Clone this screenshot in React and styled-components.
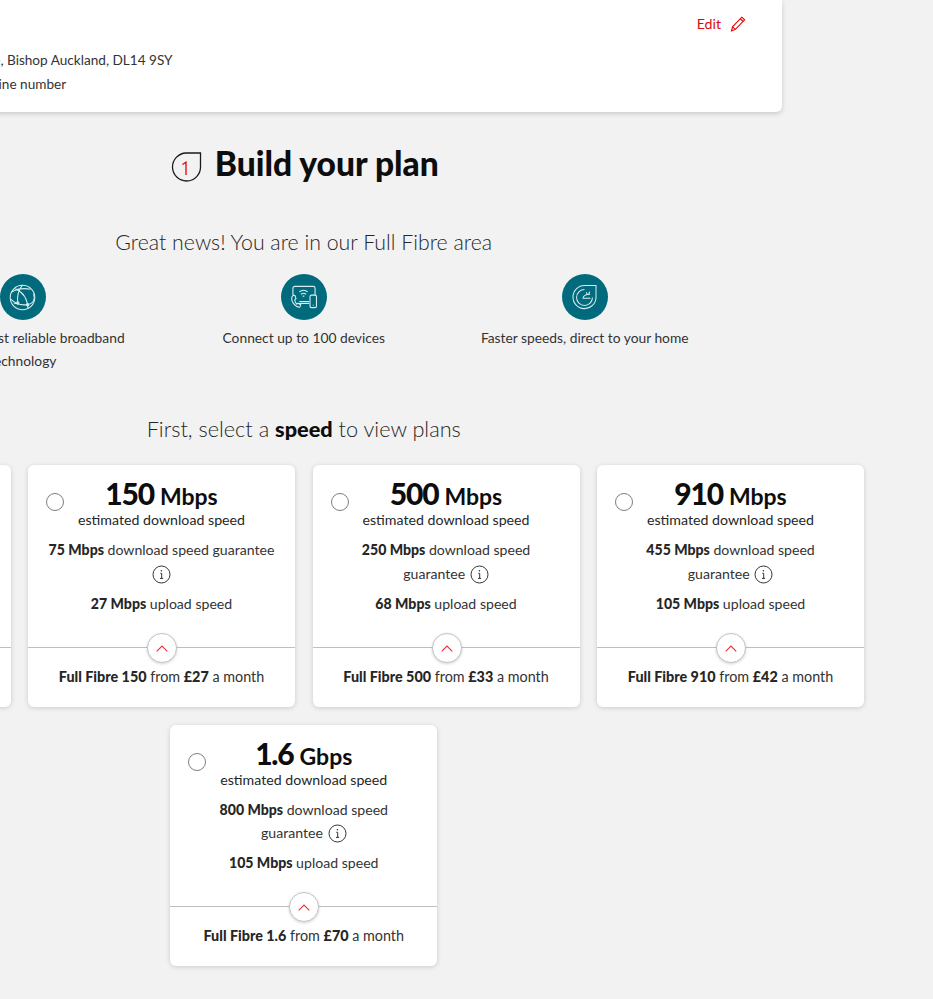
import React from "react";
import styled, { createGlobalStyle } from "styled-components";

const Global = createGlobalStyle`
  html, body {
    margin: 0;
    padding: 0;
    background: #f2f2f2;
    overflow: hidden;
  }
  body {
    font-family: "Lato", "Liberation Sans", sans-serif;
    color: #333;
  }
`;

const Page = styled.div`
  width: 958px;
  height: 999px;
  margin-left: -175.25px;
  display: flex;
  flex-direction: column;
  align-items: center;
`;

const AddressCard = styled.section`
  box-sizing: border-box;
  align-self: flex-start;
  width: 957.25px;
  height: 112px;
  background: #fff;
  border-radius: 0 0 6px 6px;
  box-shadow: 0 2px 5px rgba(0, 0, 0, 0.16);
  padding: 15px 36px 0 0;
  display: flex;
  flex-direction: column;
`;

const EditLink = styled.a`
  align-self: flex-end;
  display: flex;
  align-items: center;
  gap: 9px;
  font-size: 14.2px;
  line-height: 18px;
  color: #d80a0a;
`;

const AddressLines = styled.div`
  margin-top: 15px;
  padding-left: 115px;
`;

const AddressLine = styled.div`
  font-size: 13.6px;
  line-height: 24px;
  color: #333;
  white-space: nowrap;
`;

const StepHeading = styled.h2`
  margin: 30px 0 0 1px;
  display: flex;
  align-items: center;
  gap: 13px;
  font-size: 33.6px;
  line-height: 42px;
  font-weight: 900;
  color: #0d0d0d;
`;

const Lead = styled.h3`
  margin: ${(p) => p.$top}px 0 0;
  font-size: ${(p) => p.$size}px;
  line-height: 28px;
  font-weight: 300;
  color: #262626;
  strong {
    font-weight: 900;
    color: #0d0d0d;
  }
`;

const Features = styled.div`
  display: grid;
  grid-template-columns: repeat(3, 281px);
  margin-top: 18px;
`;

const Feature = styled.div`
  display: flex;
  flex-direction: column;
  align-items: center;
  text-align: center;
  gap: 6px;
`;

const FeatureIcon = styled.div`
  width: 46px;
  height: 46px;
  border-radius: 50%;
  background: #016a7c;
  display: flex;
  align-items: center;
  justify-content: center;
`;

const FeatureText = styled.div`
  width: 220px;
  font-size: 13.8px;
  line-height: 23px;
  color: #333;
`;

const Plans = styled.div`
  margin-top: 22px;
  display: flex;
  flex-wrap: wrap;
  justify-content: center;
  gap: 18px 17.5px;
  width: 1130px;
  flex: none;
`;

const PlanCard = styled.article`
  box-sizing: border-box;
  position: relative;
  width: 267px;
  height: ${(p) => (p.$compact ? 241 : 242)}px;
  background: #fff;
  border-radius: 6px;
  box-shadow: 0 1px 5px rgba(0, 0, 0, 0.16);
  display: flex;
  flex-direction: column;
`;

const Radio = styled.span`
  position: absolute;
  left: 18px;
  top: 28px;
  box-sizing: border-box;
  width: 18px;
  height: 18px;
  border: 1px solid #7e7e7e;
  border-radius: 50%;
  background: #fff;
`;

const PlanBody = styled.div`
  height: ${(p) => (p.$compact ? 182 : 183)}px;
  flex: none;
  box-sizing: border-box;
  padding: 12px 14px 0;
  text-align: center;
  border-bottom: 1px solid #bebebe;
`;

const Speed = styled.div`
  font-size: 30px;
  line-height: 32px;
  font-weight: 900;
  letter-spacing: -1.2px;
  color: #0d0d0d;
  small {
    font-size: 23px;
    font-weight: 700;
    letter-spacing: 0;
  }
`;

const SpeedNote = styled.div`
  font-size: 14.2px;
  line-height: 16px;
  color: #262626;
`;

const Detail = styled.p`
  margin: ${(p) => p.$top}px 0 0;
  font-size: 14.1px;
  line-height: ${(p) => (p.$compact ? 23 : 24)}px;
  color: #333;
  b {
    font-weight: 900;
    color: #262626;
  }
`;

const InfoIcon = styled.svg`
  display: ${(p) => (p.$block ? "block" : "inline-block")};
  margin: ${(p) => (p.$block ? "2.5px auto 0" : "0 0 0 1px")};
  vertical-align: -5px;
`;

const Toggle = styled.button`
  position: absolute;
  left: 119px;
  top: ${(p) => (p.$compact ? 167 : 168)}px;
  width: 30px;
  height: 30px;
  padding: 0;
  border: 1px solid #c4c4c4;
  border-radius: 50%;
  background: #fff;
  box-shadow: 0 1px 3px rgba(0, 0, 0, 0.18);
  display: flex;
  align-items: center;
  justify-content: center;
`;

const PlanFooter = styled.div`
  font-size: 14.35px;
  line-height: 18px;
  text-align: center;
  color: #333;
  padding-top: 20px;
  b {
    font-weight: 900;
    color: #262626;
  }
`;

const StepBadge = () => (
  <svg width="32" height="32" viewBox="0 0 32 32" style={{ marginTop: 5 }}>
    <path
      d="M16 3h14.500v14a14 14 0 1 1-14.500-14z"
      fill="none"
      stroke="#1a1a1a"
      strokeWidth="1.300"
    />
    <path d="M12.500 14.500 16 12.300V25" fill="none" stroke="#e60000" strokeWidth="1.300" />
  </svg>
);

const Pencil = () => (
  <svg width="16" height="16" viewBox="0 0 16 16" fill="none" stroke="#e60000" strokeWidth="1.100">
    <path d="M11.800 1.200 14.600 3.800 5.400 13.400 1.500 14.800 2.500 10.800z" />
    <path d="M2.500 10.800 5.400 13.400M10.300 2.800l2.800 2.700" />
  </svg>
);

const Info = ({ block }) => (
  <InfoIcon $block={block} width="19" height="19" viewBox="0 0 19 19">
    <circle cx="9.500" cy="9.500" r="8.500" fill="none" stroke="#333" strokeWidth="1" />
    <path d="M8.300 8.300h1.400v5M8 13.400h3.100" fill="none" stroke="#333" strokeWidth="1" />
    <circle cx="9.400" cy="5.700" r="0.800" fill="#333" />
  </InfoIcon>
);

const Chevron = () => (
  <svg width="12" height="7" viewBox="0 0 12 7" fill="none" stroke="#ee2f35" strokeWidth="1.100">
    <path d="M.7 6.300 6 1l5.300 5.300" />
  </svg>
);

const GlobeIcon = () => (
  <svg width="27" height="27" viewBox="0 0 34 34" fill="none" stroke="#d6eef1" strokeWidth="1.300">
    <circle cx="17" cy="17" r="15.500" />
    <path d="M3.500 10C10 6 18 5 27 6.500M17 1.500C12 7 10 14 11 24M8 6c7 3 15 10 16 25M2 19c6 6 14 8 21 7M31 12c2 7 0 13-8 14M11 24l-5 1" />
    <circle cx="11" cy="24" r="1.500" />
    <circle cx="23.500" cy="26" r="1.500" />
  </svg>
);

const DevicesIcon = () => (
  <svg width="28" height="24" viewBox="0 0 30 26" fill="none" stroke="#d6eef1" strokeWidth="1.200">
    <path d="M3 11V3.500A2 2 0 0 1 5 1.500h20a2 2 0 0 1 2 2V11" />
    <path d="M8 20h12.500M10 18h10.500" />
    <rect x="21.500" y="11" width="7" height="13.500" rx="1.500" />
    <path d="M24.500 22h1" />
    <path d="M10 7.500a7 7 0 0 1 9 0M11.700 10a4.500 4.500 0 0 1 5.600 0M13.500 12.300a2 2 0 0 1 2 0" />
    <path d="M3.500 11c-2.500 1-2.500 6 0 9s5 4.500 7 4l1-2.500-3-1.800-1.500 1c-1-1-2-3-2-4.700l1.300-1-1-3.500z" />
  </svg>
);

const GaugeIcon = () => (
  <svg width="27" height="27" viewBox="0 0 34 34" fill="none" stroke="#d6eef1" strokeWidth="1.300">
    <path d="M17 2h14.500v15A14.500 14.500 0 1 1 17 2z" />
    <path d="M27 17a10 10 0 1 1-10-10" />
    <path d="M14.500 18h10M15 17.500c1-3 4-4.500 9-4.500M19 10.500l1.500 2M23.500 9.500l-1 3" />
  </svg>
);

const features = [
  { icon: <GlobeIcon />, text: "The UK's most reliable broadband technology" },
  { icon: <DevicesIcon />, text: "Connect up to 100 devices" },
  { icon: <GaugeIcon />, text: "Faster speeds, direct to your home" },
];

const plans = [
  { id: "74", speed: "74", unit: "Mbps", guarantee: "37 Mbps", upload: "18 Mbps", name: "Full Fibre 74", price: "£25" },
  { id: "150", speed: "150", unit: "Mbps", guarantee: "75 Mbps", upload: "27 Mbps", name: "Full Fibre 150", price: "£27", infoBlock: true },
  { id: "500", speed: "500", unit: "Mbps", guarantee: "250 Mbps", upload: "68 Mbps", name: "Full Fibre 500", price: "£33" },
  { id: "910", speed: "910", unit: "Mbps", guarantee: "455 Mbps", upload: "105 Mbps", name: "Full Fibre 910", price: "£42" },
  { id: "1600", speed: "1.6", unit: "Gbps", guarantee: "800 Mbps", upload: "105 Mbps", name: "Full Fibre 1.6", price: "£70", compact: true },
];

const Plan = ({ plan }) => (
  <PlanCard $compact={plan.compact}>
    <Radio />
    <PlanBody $compact={plan.compact}>
      <Speed>
        {plan.speed} <small>{plan.unit}</small>
      </Speed>
      <SpeedNote>estimated download speed</SpeedNote>
      <Detail $top={10} $compact={plan.compact}>
        <b>{plan.guarantee}</b> download speed{" "}
        {plan.infoBlock ? "guarantee" : <><br />guarantee <Info /></>}
      </Detail>
      {plan.infoBlock && <Info block />}
      <Detail $top={plan.infoBlock ? 8.5 : plan.compact ? 7 : 6} $compact={plan.compact}>
        <b>{plan.upload}</b> upload speed
      </Detail>
    </PlanBody>
    <Toggle aria-label="Collapse" $compact={plan.compact}>
      <Chevron />
    </Toggle>
    <PlanFooter>
      <b>{plan.name}</b> from <b>{plan.price}</b> a month
    </PlanFooter>
  </PlanCard>
);

export default function App() {
  return (
    <>
      <Global />
      <Page>
        <AddressCard>
          <EditLink>
            Edit <Pencil />
          </EditLink>
          <AddressLines>
            <AddressLine>1 Ivy Lane, Bishop Auckland, DL14 9SY</AddressLine>
            <AddressLine>Your landline number</AddressLine>
          </AddressLines>
        </AddressCard>
        <StepHeading>
          <StepBadge />
          Build your plan
        </StepHeading>
        <Lead $top={44} $size={21.3}>Great news! You are in our Full Fibre area</Lead>
        <Features>
          {features.map((f) => (
            <Feature key={f.text}>
              <FeatureIcon>{f.icon}</FeatureIcon>
              <FeatureText>{f.text}</FeatureText>
            </Feature>
          ))}
        </Features>
        <Lead $top={43} $size={21.7}>
          First, select a <strong>speed</strong> to view plans
        </Lead>
        <Plans>
          {plans.map((p) => (
            <Plan key={p.id} plan={p} />
          ))}
        </Plans>
      </Page>
    </>
  );
}
